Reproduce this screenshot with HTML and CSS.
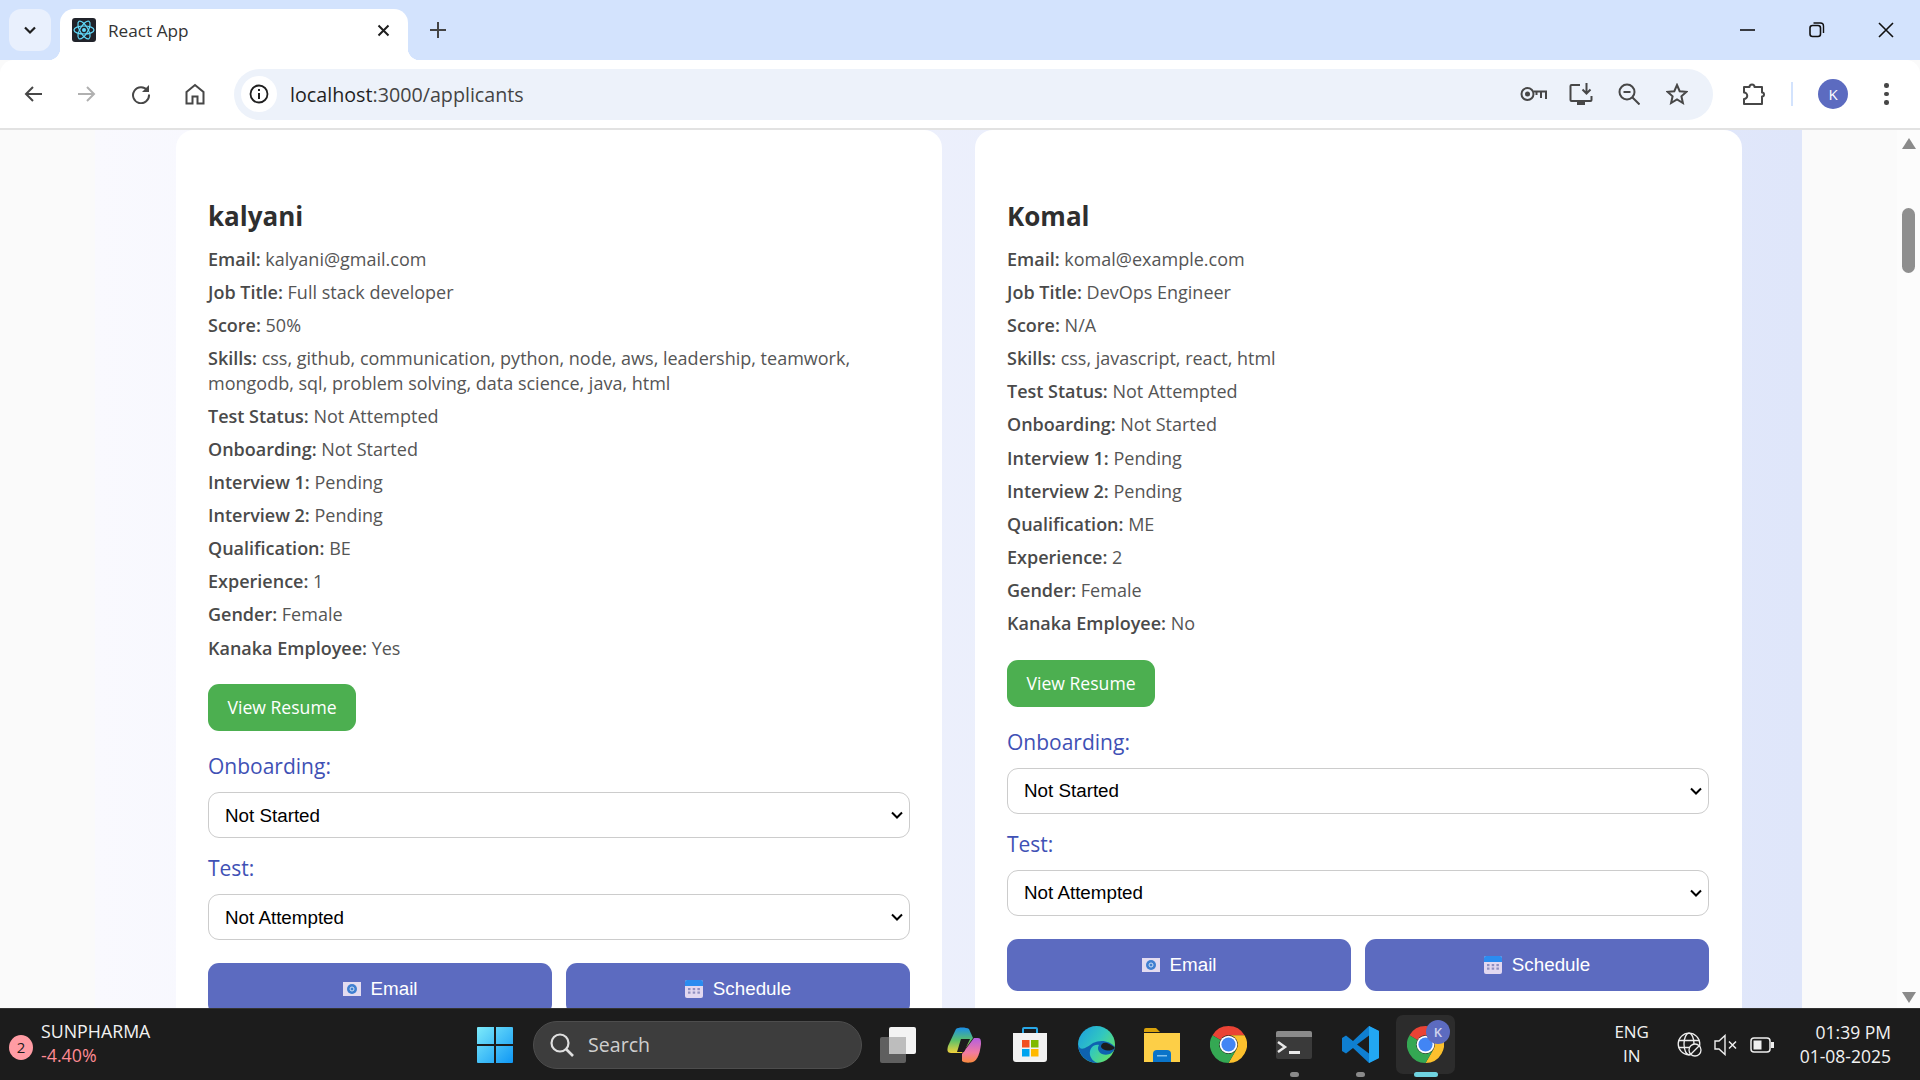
FILE: index.html
```html
<!DOCTYPE html>
<html lang="en">
<head>
    <meta charset="UTF-8">
    <title>React App</title>
    <link rel="stylesheet" href="styles.css">
</head>
<body>
    <!-- Shared icons -->
    <svg class="defs" xmlns="http://www.w3.org/2000/svg">
        <symbol id="chrome-logo" viewBox="0 0 48 48">
            <path d="M24 0A24 24 0 0 1 44.8 12L24 12A12 12 0 0 0 13.6 18L3.2 12A24 24 0 0 1 24 0Z" fill="#ea4335"/>
            <path d="M44.8 12A24 24 0 0 1 24 48L34.4 30A12 12 0 0 0 24 12Z" fill="#fbc02d"/>
            <path d="M3.2 12A24 24 0 0 0 24 48L34.4 30A12 12 0 0 1 13.6 18Z" fill="#34a853"/>
            <circle cx="24" cy="24" r="11.5" fill="#fff"/>
            <circle cx="24" cy="24" r="9.2" fill="#4285f4"/>
        </symbol>
        <symbol id="mail-icon" viewBox="0 0 18 18">
            <rect x="0" y="2" width="18" height="14" fill="#e3dcf0"/>
            <circle cx="9" cy="9" r="5" fill="#3f7fd0"/>
            <circle cx="9" cy="9" r="2" fill="none" stroke="#cfe0f5" stroke-width="1"/>
        </symbol>
        <symbol id="calendar-icon" viewBox="0 0 18 20">
            <rect x="0" y="1" width="18" height="18" rx="2" fill="#e2d8f0"/>
            <path d="M0 7V3a2 2 0 0 1 2-2h14a2 2 0 0 1 2 2v4Z" fill="#2a8cf0"/>
            <g fill="#8f8fc0">
                <rect x="3" y="9" width="2.5" height="2.2"/><rect x="7.7" y="9" width="2.5" height="2.2"/><rect x="12.4" y="9" width="2.5" height="2.2"/>
                <rect x="3" y="12.5" width="2.5" height="2.2"/><rect x="7.7" y="12.5" width="2.5" height="2.2"/><rect x="12.4" y="12.5" width="2.5" height="2.2"/>
            </g>
        </symbol>
    </svg>

    <!-- Browser tab strip -->
    <div class="tabstrip">
        <button class="tab-search">
            <svg width="14" height="14" viewBox="0 0 14 14"><path d="M2 4.5l5 5 5-5" fill="none" stroke="#1f1f1f" stroke-width="2.2"/></svg>
        </button>
        <div class="tab">
            <svg class="favicon" width="24" height="24" viewBox="0 0 24 24">
                <rect width="24" height="24" rx="3" fill="#20232a"/>
                <g fill="none" stroke="#61dafb" stroke-width="1.2">
                    <ellipse cx="12" cy="12" rx="10" ry="4"/>
                    <ellipse cx="12" cy="12" rx="10" ry="4" transform="rotate(60 12 12)"/>
                    <ellipse cx="12" cy="12" rx="10" ry="4" transform="rotate(120 12 12)"/>
                </g>
                <circle cx="12" cy="12" r="2" fill="#61dafb"/>
            </svg>
            <span class="tab-title">React App</span>
            <svg class="tab-close" width="13" height="13" viewBox="0 0 13 13"><path d="M1.5 1.5l10 10M11.5 1.5l-10 10" stroke="#1f1f1f" stroke-width="2"/></svg>
        </div>
        <svg class="new-tab" width="16" height="16" viewBox="0 0 16 16"><path d="M8 0v16M0 8h16" stroke="#444" stroke-width="2"/></svg>
        <div class="window-controls">
            <svg width="16" height="16" viewBox="0 0 16 16"><path d="M0 8h15" stroke="#111" stroke-width="1.6"/></svg>
            <svg width="16" height="16" viewBox="0 0 16 16"><rect x="1" y="3.5" width="10.5" height="11" rx="2.5" fill="none" stroke="#111" stroke-width="1.6"/><path d="M4.5 1h7a3 3 0 0 1 3 3v7" fill="none" stroke="#111" stroke-width="1.4"/></svg>
            <svg width="16" height="16" viewBox="0 0 16 16"><path d="M1 1l14 14M15 1L1 15" stroke="#111" stroke-width="1.6"/></svg>
        </div>
    </div>

    <!-- Browser toolbar -->
    <div class="toolbar">
        <span class="nav-btn"><svg width="20" height="20" viewBox="0 0 20 20"><path d="M19 10H3M10 3l-7 7 7 7" fill="none" stroke="#474747" stroke-width="2"/></svg></span>
        <span class="nav-btn"><svg width="20" height="20" viewBox="0 0 20 20"><path d="M1 10h16M10 3l7 7-7 7" fill="none" stroke="#b0b0b0" stroke-width="2"/></svg></span>
        <span class="nav-btn"><svg width="20" height="20" viewBox="0 0 20 20"><path d="M16.5 6.5A8 8 0 1 0 18 10.5" fill="none" stroke="#474747" stroke-width="2"/><path d="M18 1v7h-7Z" fill="#474747"/></svg></span>
        <span class="nav-btn"><svg width="20" height="22" viewBox="0 0 20 22"><path d="M1.5 9L10 2l8.5 7v11.5h-6v-7h-5v7h-6Z" fill="none" stroke="#474747" stroke-width="2"/></svg></span>
        <div class="omnibox">
            <span class="site-info"><svg width="20" height="20" viewBox="0 0 20 20"><circle cx="10" cy="10" r="8.5" fill="none" stroke="#1f1f1f" stroke-width="1.8"/><path d="M10 9v6M10 5v2" stroke="#1f1f1f" stroke-width="2"/></svg></span>
            <span class="url"><span class="url-host">localhost</span>:3000/applicants</span>
            <div class="omni-icons">
                <span class="omni-btn"><svg width="27" height="16" viewBox="0 0 27 16"><circle cx="7.5" cy="8" r="6" fill="none" stroke="#474747" stroke-width="2"/><circle cx="7.5" cy="8" r="2.5" fill="#474747"/><path d="M13.5 5.5H26v7.5M21 6v6M16.5 6v3" fill="none" stroke="#474747" stroke-width="2"/></svg></span>
                <span class="omni-btn"><svg width="24" height="24" viewBox="0 0 24 24"><path d="M11 3H2.5a1 1 0 0 0-1 1v14a1 1 0 0 0 1 1h19a1 1 0 0 0 1-1v-4" fill="none" stroke="#474747" stroke-width="2"/><path d="M8 20h8v3H8Z" fill="#474747"/><path d="M17.5 1v10M13.5 7.5l4 4 4-4" fill="none" stroke="#474747" stroke-width="2"/></svg></span>
                <span class="omni-btn"><svg width="22" height="22" viewBox="0 0 22 22"><circle cx="9" cy="9" r="7.5" fill="none" stroke="#474747" stroke-width="2"/><path d="M14.5 14.5l7 7M5.5 9h7" stroke="#474747" stroke-width="2"/></svg></span>
                <span class="omni-btn"><svg width="22" height="22" viewBox="0 0 22 22"><path d="M11 2l2.7 6.2 6.8.6-5.1 4.5 1.5 6.7L11 16.500 5.100 20l1.500-6.700L1.500 8.800l6.800-.6Z" fill="none" stroke="#474747" stroke-width="2"/></svg></span>
            </div>
        </div>
        <span class="puzzle"><svg width="24" height="24" viewBox="0 0 24 24"><path d="M2 5h5.500a2.500 2.500 0 0 1 5 0H20v5.500a2 2 0 0 1 0 4V22H2v-5a3 3 0 0 0 0-6.500Z" fill="none" stroke="#474747" stroke-width="2" stroke-linejoin="round"/></svg></span>
        <span class="toolbar-divider"></span>
        <span class="avatar">K</span>
        <span class="menu-dots"><i></i><i></i><i></i></span>
    </div>

    <!-- Page content -->
    <div class="viewport">
        <div class="page">
            <div class="applicants">
                <div class="card">
                    <h2>kalyani</h2>
                    <p><b>Email:</b> kalyani@gmail.com</p>
                    <p><b>Job Title:</b> Full stack developer</p>
                    <p><b>Score:</b> 50%</p>
                    <p><b>Skills:</b> css, github, communication, python, node, aws, leadership, teamwork, mongodb, sql, problem solving, data science, java, html</p>
                    <p><b>Test Status:</b> Not Attempted</p>
                    <p><b>Onboarding:</b> Not Started</p>
                    <p><b>Interview 1:</b> Pending</p>
                    <p><b>Interview 2:</b> Pending</p>
                    <p><b>Qualification:</b> BE</p>
                    <p><b>Experience:</b> 1</p>
                    <p><b>Gender:</b> Female</p>
                    <p><b>Kanaka Employee:</b> Yes</p>
                    <a class="resume-btn" href="#">View Resume</a>
                    <label class="field-label">Onboarding:</label>
                    <select class="field-select"><option>Not Started</option></select>
                    <label class="field-label">Test:</label>
                    <select class="field-select"><option>Not Attempted</option></select>
                    <div class="card-actions">
                        <button class="action-btn"><svg width="18" height="18"><use href="#mail-icon"/></svg>Email</button>
                        <button class="action-btn"><svg width="18" height="20"><use href="#calendar-icon"/></svg>Schedule</button>
                    </div>
                </div>
                <div class="card">
                    <h2>Komal</h2>
                    <p><b>Email:</b> komal@example.com</p>
                    <p><b>Job Title:</b> DevOps Engineer</p>
                    <p><b>Score:</b> N/A</p>
                    <p><b>Skills:</b> css, javascript, react, html</p>
                    <p><b>Test Status:</b> Not Attempted</p>
                    <p><b>Onboarding:</b> Not Started</p>
                    <p><b>Interview 1:</b> Pending</p>
                    <p><b>Interview 2:</b> Pending</p>
                    <p><b>Qualification:</b> ME</p>
                    <p><b>Experience:</b> 2</p>
                    <p><b>Gender:</b> Female</p>
                    <p><b>Kanaka Employee:</b> No</p>
                    <a class="resume-btn" href="#">View Resume</a>
                    <label class="field-label">Onboarding:</label>
                    <select class="field-select"><option>Not Started</option></select>
                    <label class="field-label">Test:</label>
                    <select class="field-select"><option>Not Attempted</option></select>
                    <div class="card-actions">
                        <button class="action-btn"><svg width="18" height="18"><use href="#mail-icon"/></svg>Email</button>
                        <button class="action-btn"><svg width="18" height="20"><use href="#calendar-icon"/></svg>Schedule</button>
                    </div>
                </div>
            </div>
        </div>
        <div class="scrollbar">
            <svg width="14" height="11" viewBox="0 0 14 11"><path d="M7 0l7 11H0Z" fill="#8a8a8a"/></svg>
            <span class="scroll-thumb"></span>
            <svg class="scroll-down" width="14" height="11" viewBox="0 0 14 11"><path d="M7 11L14 0H0Z" fill="#8a8a8a"/></svg>
        </div>
    </div>

    <!-- Windows taskbar -->
    <div class="taskbar">
        <div class="stock">
            <span class="stock-badge">2</span>
            <div class="stock-text">
                <div>SUNPHARMA</div>
                <div class="stock-change">-4.40%</div>
            </div>
        </div>
        <div class="tb-center">
            <svg class="win-logo" width="36" height="36" viewBox="0 0 36 36">
                <defs><linearGradient id="win" x1="0" y1="0" x2="1" y2="1"><stop offset="0" stop-color="#7debfa"/><stop offset="1" stop-color="#0f97f5"/></linearGradient></defs>
                <path d="M0 1a1 1 0 0 1 1-1h16v17H0ZM19 0h16a1 1 0 0 1 1 1v16H19ZM0 19h17v17H1a1 1 0 0 1-1-1ZM19 19h17v16a1 1 0 0 1-1 1H19Z" fill="url(#win)"/>
            </svg>
            <div class="search-box">
                <svg width="26" height="26" viewBox="0 0 26 26"><circle cx="11" cy="11" r="8.5" fill="none" stroke="#e0e0e0" stroke-width="2.2"/><path d="M17 17l7 7" stroke="#e0e0e0" stroke-width="2.6"/></svg>
                <span>Search</span>
            </div>
            <span class="tb-slot"><svg width="36" height="36" viewBox="0 0 36 36"><rect x="0" y="10" width="26" height="26" rx="2" fill="#5f5f5f"/><rect x="9" y="0" width="27" height="27" rx="2" fill="#f3f3f3"/><rect x="9" y="10" width="17" height="17" fill="#bdbdbd"/></svg></span>
            <span class="tb-slot"><svg width="34" height="36" viewBox="0 0 34 36">
                <defs>
                    <linearGradient id="cp1" x1="0" y1="0" x2="0" y2="1"><stop offset="0" stop-color="#1b8fe8"/><stop offset=".5" stop-color="#5cc06a"/><stop offset="1" stop-color="#f3d23a"/></linearGradient>
                    <linearGradient id="cp2" x1="0" y1="0" x2="0" y2="1"><stop offset="0" stop-color="#b45fe0"/><stop offset=".6" stop-color="#f27ba0"/><stop offset="1" stop-color="#f98a3c"/></linearGradient>
                </defs>
                <path d="M9 2c2-2 10-2 13 0l4 9-11 15H4c-4 0-4-3-3-7Z" fill="url(#cp1)"/>
                <path d="M15 27l12-16h4c3 0 3 3 3 6-1 8-3 16-8 18-3 1-9 1-11-1Z" fill="url(#cp2)"/>
                <path d="M14 12h9l-6 13h-7Z" fill="#1c1c1c"/>
            </svg></span>
            <span class="tb-slot"><svg width="36" height="36" viewBox="0 0 36 36">
                <path d="M11 6V2a1 1 0 0 1 1-1h12a1 1 0 0 1 1 1v4" fill="none" stroke="#29a8e8" stroke-width="2"/>
                <path d="M1 6h34v26a3 3 0 0 1-3 3H4a3 3 0 0 1-3-3Z" fill="#f2f2f2"/>
                <rect x="10" y="13" width="7.5" height="7.5" fill="#f25022"/><rect x="19" y="13" width="7.5" height="7.5" fill="#7fba00"/>
                <rect x="10" y="22" width="7.5" height="7.5" fill="#00a4ef"/><rect x="19" y="22" width="7.5" height="7.5" fill="#ffb900"/>
            </svg></span>
            <span class="tb-slot"><svg width="37" height="37" viewBox="0 0 37 37">
                <defs><linearGradient id="edge" x1="0" y1="0" x2="1" y2=".7"><stop offset="0" stop-color="#1b9de2"/><stop offset=".55" stop-color="#31c7c0"/><stop offset="1" stop-color="#63e06a"/></linearGradient></defs>
                <circle cx="18.5" cy="18.5" r="18.5" fill="url(#edge)"/>
                <path d="M37 21c-1 7-8 9-13 7-4-2-5-6-3-9-6-1-10 4-9 10 1 4 4 7 8 8C9 37 0 29 0 18c2 9 9 3 15-1 8-4 17-2 22 4Z" fill="#0e62b0"/>
                <path d="M37 22c-5 4-12 3-14-1 0-3 2-5 6-4 3 1 6 3 8 5Z" fill="#1c1c1c"/>
            </svg></span>
            <span class="tb-slot"><svg width="36" height="34" viewBox="0 0 36 34">
                <path d="M0 2a2 2 0 0 1 2-2h10l4 4h-16Z" fill="#d9a20b"/>
                <path d="M0 5h36v29H0Z" fill="#fdcf47"/>
                <path d="M9 34v-8a4 4 0 0 1 4-4h10a4 4 0 0 1 4 4v8Z" fill="#0a74c9"/>
                <rect x="13" y="27" width="10" height="1.5" fill="#7ec0ee"/>
            </svg></span>
            <span class="tb-slot"><svg width="37" height="37"><use href="#chrome-logo"/></svg></span>
            <span class="tb-slot tb-running"><svg width="36" height="28" viewBox="0 0 36 28">
                <rect width="36" height="28" rx="2" fill="#3a3a3a"/>
                <path d="M0 2a2 2 0 0 1 2-2h32a2 2 0 0 1 2 2v4H0Z" fill="#8a8a8a"/>
                <path d="M2 11l7 5-7 5" fill="none" stroke="#e8e8e8" stroke-width="2.5"/>
                <rect x="13" y="20" width="11" height="3" fill="#e8e8e8"/>
            </svg></span>
            <span class="tb-slot tb-running"><svg width="37" height="37" viewBox="0 0 37 37">
                <path d="M27 0l10 5v27l-10 5-16-15-7 5.500-4-2.500v-13l4-2.500 7 5.500Z" fill="#0f7fd1"/>
                <path d="M27 9.500L15 18.500l12 9Z" fill="#1c1c1c"/>
                <path d="M27 0l10 5v27l-10 5Z" fill="#22a7f2"/>
            </svg></span>
            <span class="tb-slot tb-active">
                <svg width="37" height="37"><use href="#chrome-logo"/></svg>
                <span class="tb-avatar">K</span>
            </span>
        </div>
        <div class="tray">
            <div class="lang"><div>ENG</div><div>IN</div></div>
            <svg width="25" height="25" viewBox="0 0 25 25"><g fill="none" stroke="#eee" stroke-width="1.3"><circle cx="12" cy="12" r="10.8"/><ellipse cx="12" cy="12" rx="5" ry="10.8"/><path d="M1.500 8.500h21M1.500 15.500h12"/></g><circle cx="18" cy="18" r="6" fill="#1c1c1c" stroke="#eee" stroke-width="1.3"/><path d="M14 22l8-8" stroke="#eee" stroke-width="1.3"/></svg>
            <svg width="24" height="22" viewBox="0 0 24 22"><path d="M1 7h4l6-5.500v19L5 15H1Z" fill="none" stroke="#eee" stroke-width="1.4"/><path d="M15 7.500l7 7M22 7.500l-7 7" stroke="#eee" stroke-width="1.5"/></svg>
            <svg width="24" height="16" viewBox="0 0 24 16"><rect x="1" y="1" width="19" height="14" rx="3" fill="none" stroke="#eee" stroke-width="1.5"/><rect x="3.500" y="3.500" width="8" height="9" fill="#eee"/><rect x="21" y="5" width="3" height="6" fill="#eee"/></svg>
            <div class="clock"><div>01:39 PM</div><div>01-08-2025</div></div>
        </div>
    </div>
</body>
</html>
```

FILE: styles.css
```css
* {
    box-sizing: border-box;
}
body {
    margin: 0;
    height: 100vh;
    display: flex;
    flex-direction: column;
    overflow: hidden;
    font-family: "Open Sans", sans-serif;
    background-color: #fafafa;
}
.defs {
    position: absolute;
    width: 0;
    height: 0;
}

/* Tab strip */
.tabstrip {
    flex: none;
    height: 60px;
    background-color: #d3e3fd;
    display: flex;
    align-items: flex-end;
    padding-left: 9px;
}
.tab-search {
    width: 42px;
    height: 42px;
    margin-bottom: 9px;
    border: 0;
    border-radius: 12px;
    background-color: #e9f0fd;
    display: flex;
    align-items: center;
    justify-content: center;
}
.tab {
    position: relative;
    width: 348px;
    height: 51px;
    margin-left: 9px;
    background-color: #fff;
    border-radius: 14px 14px 0 0;
    display: flex;
    align-items: center;
    padding: 0 18px 9px 12px;
    z-index: 1;
}
.tab::before,
.tab::after {
    content: "";
    position: absolute;
    bottom: 0;
    width: 12px;
    height: 12px;
}
.tab::before {
    left: -12px;
    background: radial-gradient(circle at 0 0, #d3e3fd 12px, #fff 12.5px);
}
.tab::after {
    right: -12px;
    background: radial-gradient(circle at 100% 0, #d3e3fd 12px, #fff 12.5px);
}
.tab-title {
    margin-left: 12px;
    font-size: 17.2px;
    color: #333;
}
.tab-close {
    margin-left: auto;
}
.new-tab {
    margin: 0 0 22px 22px;
}
.window-controls {
    margin-left: auto;
    margin-bottom: 22px;
    padding-right: 26px;
    display: flex;
    gap: 53px;
}

/* Toolbar */
.toolbar {
    flex: none;
    height: 70px;
    background-color: #fff;
    border-radius: 14px 14px 0 0;
    border-bottom: 2px solid #e2e2e2;
    display: flex;
    align-items: center;
    padding-left: 6px;
    position: relative;
    z-index: 0;
}
.nav-btn {
    width: 54px;
    display: flex;
    justify-content: center;
}
.omnibox {
    width: 1479px;
    height: 51px;
    margin-left: 12px;
    border-radius: 26px;
    background-color: #edf2fa;
    display: flex;
    align-items: center;
    padding: 0 12px 0 7px;
}
.site-info {
    width: 36px;
    height: 36px;
    border-radius: 50%;
    background-color: #fff;
    display: flex;
    align-items: center;
    justify-content: center;
}
.url {
    margin-left: 13px;
    font-size: 19.7px;
    color: #444;
}
.url-host {
    color: #1f1f1f;
}
.omni-icons {
    margin-left: auto;
    display: flex;
    align-items: center;
}
.omni-btn {
    width: 48px;
    display: flex;
    align-items: center;
    justify-content: center;
}
.puzzle {
    margin-left: 29px;
    display: flex;
}
.toolbar-divider {
    width: 2px;
    height: 24px;
    margin-left: 25px;
    background-color: #d3e3fd;
}
.avatar {
    width: 30px;
    height: 30px;
    margin-left: 25px;
    border-radius: 50%;
    background-color: #5c6bc0;
    color: #fff;
    font-size: 15px;
    display: flex;
    align-items: center;
    justify-content: center;
}
.menu-dots {
    margin-left: 36px;
    display: flex;
    flex-direction: column;
    gap: 4px;
}
.menu-dots i {
    width: 4.5px;
    height: 4.5px;
    border-radius: 50%;
    background-color: #474747;
}

/* Page */
.viewport {
    flex: 1;
    min-height: 0;
    display: flex;
    overflow: hidden;
}
.page {
    flex: 1;
    padding-left: 95px;
    background-color: #fafafa;
}
.applicants {
    width: 1707px;
    height: 100%;
    padding-left: 81px;
    background: linear-gradient(90deg, #f9f9fe 0%, #dfe6fa 100%);
    display: grid;
    grid-template-columns: 766px 767px;
    column-gap: 33px;
    align-items: start;
}
.card {
    height: 1000px;
    padding: 66px 32px 0;
    background-color: #fff;
    border-radius: 18px;
}
.card + .card {
    padding-right: 33px;
}
h2 {
    margin: 0 0 11px;
    font-size: 26px;
    line-height: 40px;
    font-weight: 700;
    color: #2f2f2f;
}
.card p {
    margin: 0 0 8.6px;
    font-size: 18px;
    line-height: 24.5px;
    color: #555;
}
.card b {
    font-weight: 600;
    color: #4a4a4a;
}
.resume-btn {
    display: block;
    width: 148px;
    height: 47px;
    margin-top: 24px;
    border-radius: 11px;
    background-color: #4caf50;
    color: #fff;
    font-size: 17.6px;
    line-height: 47px;
    text-align: center;
    text-decoration: none;
}
.field-label {
    display: block;
    margin-top: 21px;
    font-size: 21px;
    line-height: 28px;
    font-weight: 500;
    color: #3f51b5;
}
.field-select {
    display: block;
    width: 100%;
    height: 46px;
    margin-top: 12px;
    padding: 0 16px;
    border: 1px solid #ccc;
    border-radius: 11px;
    color: #000;
    font-family: "Liberation Sans", Arial, sans-serif;
    font-size: 18.8px;
    appearance: none;
    background: #fff url("data:image/svg+xml,%3Csvg xmlns='http://www.w3.org/2000/svg' width='12' height='8' viewBox='0 0 12 8'%3E%3Cpath d='M1 1.500l5 5 5-5' fill='none' stroke='%23000' stroke-width='2'/%3E%3C/svg%3E") no-repeat right 6px center;
}
.field-select + .field-label {
    margin-top: 16px;
}
.card-actions {
    display: grid;
    grid-template-columns: 1fr 1fr;
    column-gap: 14px;
    margin-top: 23px;
}
.action-btn {
    height: 52px;
    border: 0;
    border-radius: 11px;
    background-color: #5c6bc0;
    color: #fff;
    font-family: "Liberation Sans", Arial, sans-serif;
    font-size: 18.8px;
    display: flex;
    align-items: center;
    justify-content: center;
    gap: 10px;
}

/* Scrollbar */
.scrollbar {
    flex: none;
    width: 23px;
    background-color: #fcfcfc;
    position: relative;
    display: flex;
    flex-direction: column;
    align-items: center;
    padding-top: 8px;
}
.scroll-thumb {
    width: 13px;
    height: 65px;
    margin-top: 59px;
    border-radius: 7px;
    background-color: #8f8f8f;
}
.scroll-down {
    margin-top: auto;
    margin-bottom: 5px;
}

/* Taskbar */
.taskbar {
    flex: none;
    height: 72px;
    background-color: #1c1c1c;
    border-top: 1px solid #333;
    display: flex;
    align-items: center;
    color: #f2f2f2;
}
.stock {
    flex: none;
    width: 477px;
    display: flex;
    align-items: center;
    padding-left: 9px;
}
.stock-badge {
    width: 24px;
    height: 25px;
    margin-top: 6px;
    border-radius: 50%;
    background-color: #ff9ca4;
    color: #1c1c1c;
    font-size: 15px;
    line-height: 25px;
    text-align: center;
}
.stock-text {
    margin: 0 0 4px 8px;
    font-size: 17.8px;
    line-height: 24px;
}
.stock-change {
    color: #ff8a93;
}
.tb-center {
    flex: 1;
    display: flex;
    align-items: center;
}
.search-box {
    width: 329px;
    height: 48px;
    margin: 0 3px 0 20px;
    border-radius: 24px;
    border: 1px solid #4d4d4d;
    background-color: #3d3d3d;
    display: flex;
    align-items: center;
    gap: 13px;
    padding-left: 15px;
    font-size: 19.6px;
    color: #cfcfcf;
}
.tb-slot {
    position: relative;
    width: 66px;
    height: 59px;
    display: flex;
    align-items: center;
    justify-content: center;
}
.tb-running::after,
.tb-active::after {
    content: "";
    position: absolute;
    left: 50%;
    bottom: -3px;
    width: 9px;
    height: 5px;
    margin-left: -4.5px;
    border-radius: 3px;
    background-color: #8a8a8a;
}
.tb-active {
    width: 59px;
    margin-left: 3px;
    border-radius: 7px;
    background-color: #2c2c2c;
}
.tb-active::after {
    width: 24px;
    margin-left: -12px;
    background-color: #6fd3e0;
}
.tb-avatar {
    position: absolute;
    top: 5px;
    right: 5px;
    width: 24px;
    height: 24px;
    border-radius: 50%;
    background-color: #5c6bc0;
    color: #cfd3ee;
    font-size: 13px;
    font-weight: 600;
    line-height: 24px;
    text-align: center;
}
.tray {
    flex: none;
    display: flex;
    align-items: center;
    gap: 12px;
    padding-right: 29px;
}
.lang {
    width: 60px;
    margin: 0 3px 2px 0;
    text-align: center;
    font-size: 17px;
    line-height: 24px;
}
.clock {
    margin: 0 0 2px 14px;
    text-align: right;
    font-size: 17.5px;
    line-height: 24px;
}
```
